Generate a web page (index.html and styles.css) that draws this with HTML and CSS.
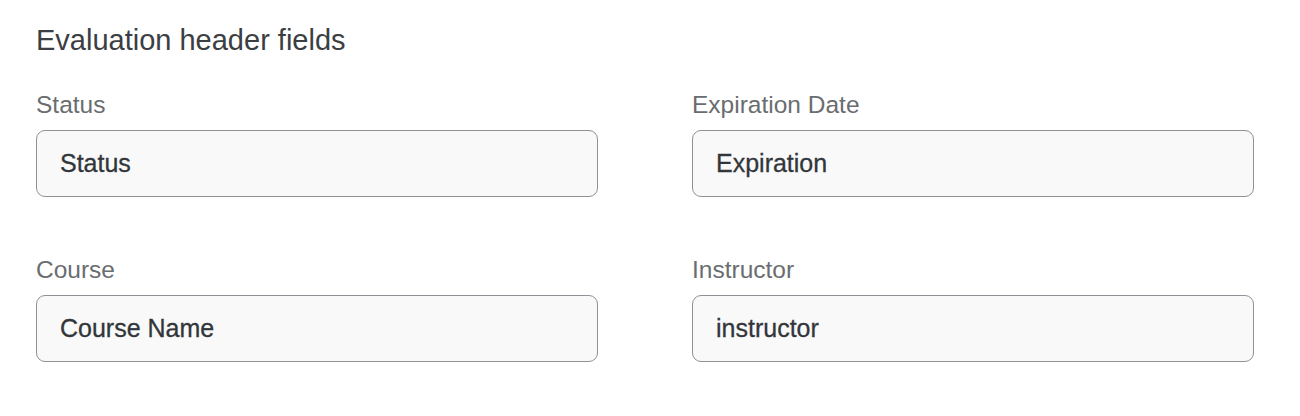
FILE: index.html
```html
<!DOCTYPE html>
<html lang="en">
<head>
  <meta charset="UTF-8">
  <meta name="viewport" content="width=device-width, initial-scale=1.0">
  <title>Evaluation header fields</title>
  <link rel="stylesheet" href="styles.css">
</head>
<body>
  <main class="panel">
    <h2 class="panel-title">Evaluation header fields</h2>

    <!-- Header field grid -->
    <div class="field-grid">
      <div class="field">
        <label for="status">Status</label>
        <input type="text" id="status" value="Status">
      </div>
      <div class="field">
        <label for="expiration">Expiration Date</label>
        <input type="text" id="expiration" value="Expiration">
      </div>
      <div class="field">
        <label for="course">Course</label>
        <input type="text" id="course" value="Course Name">
      </div>
      <div class="field">
        <label for="instructor">Instructor</label>
        <input type="text" id="instructor" value="instructor">
      </div>
    </div>
  </main>
</body>
</html>
```

FILE: styles.css
```css
/* General Styles */
body {
  margin: 0;
  font-family: "Liberation Sans", Arial, sans-serif;
  background-color: #ffffff;
  color: #32363a;
}

.panel {
  padding: 23px 0 0 36px;
}

.panel-title {
  margin: 0 0 34px;
  font-size: 29px;
  line-height: 34px;
  font-weight: normal;
  color: #3b3e42;
}

/* Field grid */
.field-grid {
  display: grid;
  grid-template-columns: 562px 562px;
  column-gap: 94px;
  row-gap: 59px;
}

.field {
  display: flex;
  flex-direction: column;
}

.field label {
  font-size: 24.5px;
  line-height: 28px;
  color: #6a6d70;
  margin-bottom: 11px;
}

.field input {
  box-sizing: border-box;
  height: 67px;
  padding: 0 23px;
  border: 1px solid #8e9296;
  border-radius: 9px;
  background-color: #f9f9f9;
  font-family: inherit;
  font-size: 25px;
  color: #32363a;
  -webkit-text-stroke: 0.3px #32363a;
}

.field input:focus {
  outline: none;
  border-color: #0a6ed1;
}
```
